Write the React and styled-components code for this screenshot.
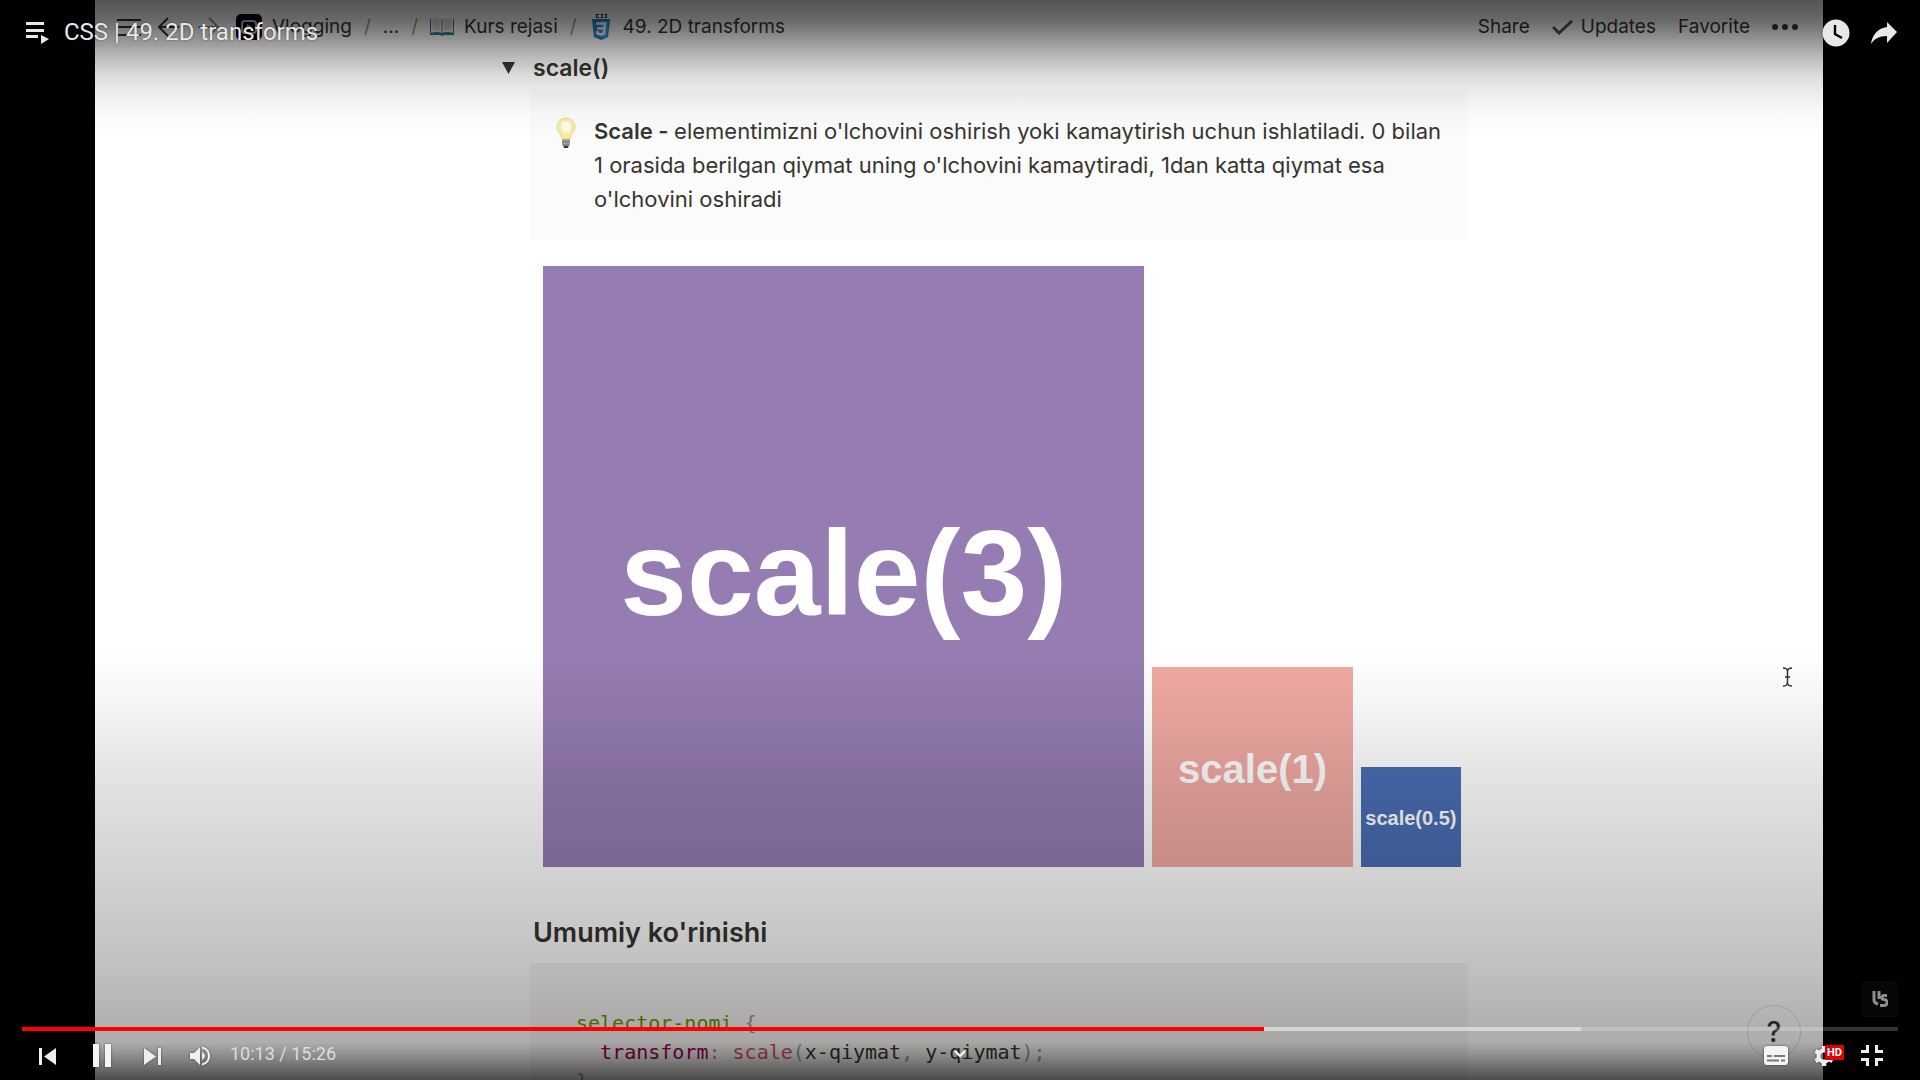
import React from "react";
import styled, { createGlobalStyle } from "styled-components";

const sans = `Inter, "Liberation Sans", sans-serif`;
const roboto = `Roboto, "Liberation Sans", sans-serif`;

const Global = createGlobalStyle`
  * { box-sizing: border-box; }
  body { margin: 0; background: #000; }
  button { font: inherit; color: inherit; background: none; border: 0; padding: 0; cursor: pointer; }
  a { color: inherit; text-decoration: none; }
  svg { display: block; flex: none; }
`;

const Player = styled.main`
  display: grid;
  grid-template: minmax(0, 1fr) / minmax(0, 1fr);
  height: 100vh;
  overflow: hidden;
  background: #000;
  & > * { grid-area: 1 / 1; position: relative; }
`;

const Frame = styled.div`
  margin: 0 97px 0 95px;
  overflow: hidden;
  background: #fff;
  color: #37352f;
  font-family: ${sans};
`;

const TopBar = styled.nav`
  display: flex;
  align-items: center;
  justify-content: space-between;
  height: 53px;
  padding: 0 24px 0 22px;
  font-size: 19px;
  line-height: 24px;
`;

const Group = styled.div`
  display: flex;
  align-items: center;
  gap: ${(p) => p.$gap}px;
`;

const Crumb = styled.a`
  display: flex;
  align-items: center;
  gap: 10px;
`;

const Slash = styled.span`
  color: #9b9a97;
`;

const BarButton = styled.button`
  display: flex;
  align-items: center;
  gap: 8px;
`;

const Column = styled.article`
  max-width: 1018px;
  margin: 0 auto;
`;

const ToggleRow = styled.div`
  display: flex;
  align-items: center;
  gap: 18px;
  height: 30px;
  margin-bottom: 7px;
  padding-left: 52px;
`;

const ToggleTitle = styled.h3`
  margin: 0;
  font-size: 23px;
  line-height: 30px;
  font-weight: 600;
`;

const ToggleBody = styled.div`
  padding-left: 80px;
`;

const Callout = styled.section`
  display: flex;
  gap: 18px;
  padding: 24px 20px 24px 26px;
  border-radius: 4px;
  background: #fbfbfb;
  font-size: 22px;
  line-height: 34px;
  svg { margin-top: 3px; }
  p { margin: 0; }
  b { font-weight: 600; }
`;

const Figure = styled.figure`
  display: grid;
  grid-template-columns: minmax(0, 6fr) minmax(0, 2fr) minmax(0, 1fr);
  align-items: end;
  gap: 8px;
  margin: 26px 7px 49px 13px;
`;

const Square = styled.div`
  display: flex;
  align-items: center;
  justify-content: center;
  aspect-ratio: 1;
  padding-top: ${(p) => p.$drop}px;
  background: ${(p) => p.$fill};
  color: #fff;
  font: bold ${(p) => p.$size}px "Liberation Sans", Arial, sans-serif;
  white-space: nowrap;
`;

const SectionTitle = styled.h2`
  margin: 0 0 13px;
  padding-left: 3px;
  font-size: 27px;
  line-height: 34px;
  font-weight: 600;
`;

const CodeBlock = styled.pre`
  margin: 0;
  padding: 46px;
  border-radius: 4px;
  background: #f7f6f3;
  color: #37352f;
  font: 20px/29px "DejaVu Sans Mono", monospace;
`;

const Token = styled.span`
  color: ${(p) => p.$color};
`;

const HelpButton = styled.button`
  position: absolute;
  right: 22px;
  bottom: 21px;
  width: 54px;
  height: 54px;
  border: 1px solid #dcdcdc;
  border-radius: 50%;
  font-size: 28px;
  font-weight: 500;
`;

const Cursor = styled.svg`
  position: absolute;
  right: 30px;
  top: 667px;
`;

const TopShade = styled.div`
  height: 140px;
  pointer-events: none;
  background: linear-gradient(
    rgba(0, 0, 0, 0.67) 0,
    rgba(0, 0, 0, 0.59) 20px,
    rgba(0, 0, 0, 0.44) 38px,
    rgba(0, 0, 0, 0.28) 56px,
    rgba(0, 0, 0, 0.15) 74px,
    rgba(0, 0, 0, 0.07) 94px,
    rgba(0, 0, 0, 0.02) 116px,
    transparent 140px
  );
`;

const BottomShade = styled.div`
  align-self: end;
  height: 440px;
  pointer-events: none;
  background: linear-gradient(
    transparent 10px,
    rgba(0, 0, 0, 0.04) 60px,
    rgba(0, 0, 0, 0.12) 150px,
    rgba(0, 0, 0, 0.18) 240px,
    rgba(0, 0, 0, 0.24) 320px,
    rgba(0, 0, 0, 0.3) 380px,
    rgba(0, 0, 0, 0.32) 402px,
    rgba(0, 0, 0, 0.46) 417px,
    rgba(0, 0, 0, 0.7) 440px
  );
`;

const Chrome = styled.div`
  display: flex;
  flex-direction: column;
  justify-content: space-between;
  color: #e8e8e8;
  font-family: ${roboto};
`;

const Header = styled.header`
  display: flex;
  align-items: center;
  height: 65px;
  padding: 0 12px;
`;

const Title = styled.h1`
  flex: 1;
  margin: 0;
  padding-bottom: 2px;
  font-size: 24px;
  line-height: 32px;
  font-weight: 400;
  text-shadow: 0 0 2px rgba(0, 0, 0, 0.5);
`;

const IconButton = styled.button`
  display: flex;
  align-items: center;
  justify-content: center;
  width: ${(p) => p.$width || 48}px;
  height: 48px;
  svg { filter: drop-shadow(0 0 1px rgba(0, 0, 0, 0.5)); }
`;

const Footer = styled.footer`
  display: flex;
  flex-direction: column;
`;

const Watermark = styled.a`
  display: flex;
  align-items: center;
  justify-content: center;
  align-self: flex-end;
  width: 36px;
  height: 36px;
  margin: 0 22px 10px;
  background: #060708;
`;

const Progress = styled.input`
  appearance: none;
  display: block;
  height: 4px;
  margin: 0 22px;
  background: linear-gradient(
    90deg,
    #f00 ${(p) => p.$played}%,
    rgba(255, 255, 255, 0.5) ${(p) => p.$played}% ${(p) => p.$loaded}%,
    rgba(255, 255, 255, 0.2) ${(p) => p.$loaded}%
  );
  &::-webkit-slider-thumb { appearance: none; width: 0; height: 0; }
`;

const Controls = styled.div`
  display: flex;
  align-items: center;
  height: 49px;
  padding: 0 24px;
`;

const Time = styled.div`
  flex: 1;
  padding: 0 0 3px 6px;
  font-size: 18px;
  line-height: 24px;
  color: #ddd;
`;

const SettingsIcon = styled.span`
  position: relative;
  display: block;
`;

const HdBadge = styled.span`
  position: absolute;
  left: 11px;
  top: 0;
  padding: 0 2px;
  border-radius: 1px;
  background: #e00000;
  color: #fff;
  font: bold 11px/15px ${roboto};
`;

const Chevron = styled.svg`
  position: absolute;
  left: calc(50% - 6px);
  bottom: 22px;
`;

const MenuIcon = () => (
  <svg width="24" height="20" stroke="#37352f" strokeWidth="2"><path d="M0 3h24M0 10h24M0 18h24" /></svg>
);
const Arrow = ({ flip, color }) => (
  <svg width="22" height="20" viewBox="0 0 22 20" fill="none" stroke={color} strokeWidth="2">
    <path d={flip ? "M1 10h19M12 1l9 9-9 9" : "M21 10H2M10 1l-9 9 9 9"} />
  </svg>
);
const ChannelIcon = () => (
  <svg width="26" height="26" viewBox="0 0 26 26">
    <rect width="26" height="26" rx="5" fill="#000" />
    <rect x="6" y="7" width="14" height="12" rx="3" fill="none" stroke="#bbb" strokeWidth="2" />
    <path d="M11 10l5 3-5 3z" fill="#bbb" />
  </svg>
);
const BookIcon = () => (
  <svg width="24" height="19" viewBox="0 0 24 19">
    <path d="M0 2h24v16H14l-2 1-2-1H0z" fill="#2f7ba5" />
    <path d="M1 1Q7-1 12 2v14Q7 14 1 16zM23 1Q17-1 12 2v14q5-2 11 0z" fill="#f2f0ec" />
    <path d="M12 2v14" stroke="#777" />
    <path d="M3 4h7M3 6h7M3 8h7M3 10h7M3 12h7M14 4h7M14 6h7M14 8h7M14 10h7M14 12h7" stroke="#c4c1bc" />
  </svg>
);
const CssIcon = () => (
  <svg width="24" height="26" viewBox="-3 0 24 26">
    <path d="M7 .5H4.500v3H7M11 .5H9l1.500 1.500v1.500H8.500M15 .5h-2l1.500 1.500v1.500h-2" fill="none" stroke="#111" />
    <path d="M0 5h18l-2 18-7 3-7-3z" fill="#2483cc" />
    <path d="M9 7h7l-1 15-6 2z" fill="#33a9ee" />
    <path d="M4 9.500h9l-1 10-3 1-3.500-1v-2.500M5 14.500h7" fill="none" stroke="#fff" strokeWidth="2.400" />
  </svg>
);
const CheckIcon = () => (
  <svg width="21" height="16" viewBox="0 0 21 16" fill="none" stroke="#55534e" strokeWidth="3"><path d="M1 8l6 6L20 2" /></svg>
);
const DotsIcon = () => (
  <svg width="27" height="8" fill="#37352f"><circle cx="3" cy="4" r="3" /><circle cx="13" cy="4" r="3" /><circle cx="23" cy="4" r="3" /></svg>
);
const BulbIcon = () => (
  <svg width="20" height="32" viewBox="0 0 20 32">
    <path d="M10 1a9 9 0 0 1 9 9c0 5-4 6-5 12H6C5 16 1 15 1 10a9 9 0 0 1 9-9z" fill="#fbe9a6" stroke="#ecd88c" />
    <ellipse cx="10" cy="10" rx="5" ry="6" fill="#fffbe6" />
    <path d="M6 22h8v6l-2 3H8l-2-3z" fill="#a5a5a5" />
    <path d="M6 25h8M7 28h6" stroke="#666" />
    <path d="M8 30h4" stroke="#333" strokeWidth="2" />
  </svg>
);

const PlaylistIcon = () => (
  <svg width="24" height="24" viewBox="0 0 24 24" fill="#e8e8e8">
    <path d="M0 1h18v3H0zM0 8h18v3H0zM0 14h12v3H0zM15 14l8 4-8 5z" />
  </svg>
);
const ClockIcon = () => (
  <svg width="28" height="28" viewBox="0 0 28 28">
    <circle cx="14" cy="14" r="13.5" fill="#e8e8e8" />
    <path d="M13 6v9l7 4" fill="none" stroke="#000" strokeWidth="2.4" />
  </svg>
);
const ShareIcon = () => (
  <svg width="28" height="24" viewBox="0 0 28 24" fill="#e8e8e8"><path d="M17 1l10 10-10 11v-7C9 15 4 18 1 23 2 14 8 7 17 6z" /></svg>
);
const PrevIcon = () => (
  <svg width="18" height="18" fill="#eee"><path d="M0 1h3v17H0zM17 1v17L5 9.500z" /></svg>
);
const NextIcon = () => (
  <svg width="18" height="18" fill="#eee"><path d="M15 1h3v17h-3zM1 1v17l12-8.500z" /></svg>
);
const PauseIcon = () => (
  <svg width="22" height="24" fill="#f4f4f4"><path d="M4 0h6v23H4zM16 0h6v23h-6z" /></svg>
);
const VolumeIcon = () => (
  <svg width="22" height="20" viewBox="0 0 22 20" fill="#f0f0f0">
    <path d="M1 7h4l6-6v18l-6-6H1zM13 6q3 1.500 3 4t-3 4z" />
    <path d="M13 1.500c5 1 7 5 7 8.500s-2 7.500-7 8.500" fill="none" stroke="#f0f0f0" strokeWidth="2.200" />
  </svg>
);
const CaptionsIcon = () => (
  <svg width="24" height="20" viewBox="0 0 24 20">
    <rect width="24" height="19" rx="3" fill="#f4f4f4" />
    <path d="M3 10h5M10 10h11M3 14.500h12M17 14.500h4" stroke="#777" strokeWidth="2" />
  </svg>
);
const GearIcon = () => (
  <svg width="20" height="22" viewBox="0 0 20 22">
    <circle cx="10" cy="11" r="5.500" fill="none" stroke="#eee" strokeWidth="4" />
    <path
      d="M10 1v4M10 17v4M1.500 6l3.500 2M15 14l3.500 2M1.500 16L5 14M15 8l3.500-2"
      stroke="#eee"
      strokeWidth="4.500"
    />
  </svg>
);
const ExitFullIcon = () => (
  <svg width="22" height="22" fill="none" stroke="#eee" strokeWidth="3"><path d="M0 6.500h6.500V0M15.500 0v6.500H22M0 14.500h6.500V21M15.500 21v-6.500H22" /></svg>
);
const MarkIcon = () => (
  <svg width="16" height="16" viewBox="0 0 16 16" fill="none" stroke="#8e8e8e" strokeWidth="3">
    <path d="M2 0v9q0 3 4 4M7 0v8M15 4.500h-3q-2 0-2 2t2 2q3 0 3 3t-3 3H8" />
  </svg>
);

const squares = [
  { label: "scale(3)", fill: "#957cb2", size: 120, drop: 12 },
  { label: "scale(1)", fill: "#f0aaa3", size: 40, drop: 4 },
  { label: "scale(0.5)", fill: "#496eb4", size: 20, drop: 2 },
];

const punct = "#999";
const duration = 926;
const position = 613;

export default function App() {
  return (
    <>
      <Global />
      <Player>
        <Frame>
          <TopBar>
            <Group $gap={12}>
              <Group $gap={17}>
                <BarButton aria-label="Menu"><MenuIcon /></BarButton>
                <BarButton aria-label="Back"><Arrow color="#37352f" /></BarButton>
                <BarButton aria-label="Forward"><Arrow flip color="#9b9a97" /></BarButton>
                <Crumb href="#vlogging"><ChannelIcon />Vlogging</Crumb>
              </Group>
              <Slash>/</Slash>
              <Crumb href="#more">...</Crumb>
              <Slash>/</Slash>
              <Crumb href="#kurs"><BookIcon />Kurs rejasi</Crumb>
              <Slash>/</Slash>
              <Crumb href="#transforms"><CssIcon />49. 2D transforms</Crumb>
            </Group>
            <Group $gap={22}>
              <BarButton>Share</BarButton>
              <BarButton><CheckIcon />Updates</BarButton>
              <BarButton>Favorite</BarButton>
              <BarButton aria-label="More"><DotsIcon /></BarButton>
            </Group>
          </TopBar>
          <Column>
            <ToggleRow>
              <BarButton aria-label="Toggle section">
                <svg width="13" height="12" fill="#37352f"><path d="M0 0h13L6.500 12z" /></svg>
              </BarButton>
              <ToggleTitle>scale()</ToggleTitle>
            </ToggleRow>
            <ToggleBody>
              <Callout>
                <BulbIcon />
                <p>
                  <b>Scale - </b>elementimizni o'lchovini oshirish yoki kamaytirish uchun ishlatiladi. 0 bilan
                  1 orasida berilgan qiymat uning o'lchovini kamaytiradi, 1dan katta qiymat esa o'lchovini oshiradi
                </p>
              </Callout>
              <Figure>
                {squares.map((s) => (
                  <Square key={s.label} $fill={s.fill} $size={s.size} $drop={s.drop}>{s.label}</Square>
                ))}
              </Figure>
              <SectionTitle>Umumiy ko'rinishi</SectionTitle>
              <CodeBlock>
                <code>
                  <Token $color="#669900">selector-nomi</Token> <Token $color={punct}>{"{"}</Token>{"\n  "}
                  <Token $color="#990055">transform</Token><Token $color={punct}>:</Token>{" "}
                  <Token $color="#dd4a68">scale</Token><Token $color={punct}>(</Token>x-qiymat<Token $color={punct}>,</Token>{" "}
                  y-qiymat<Token $color={punct}>);</Token>{"\n"}
                  <Token $color={punct}>{"}"}</Token>
                </code>
              </CodeBlock>
            </ToggleBody>
          </Column>
          <HelpButton>?</HelpButton>
          <Cursor width="11" height="20" viewBox="0 0 11 20" fill="none" stroke="#333" strokeWidth="1.500">
            <path d="M1 1q4 0 4.500 3Q6 1 10 1M5.500 4v12M1 19q4 0 4.500-3 .5 3 4.500 3M3 10h5" />
          </Cursor>
        </Frame>
        <TopShade />
        <BottomShade />
        <Chrome>
          <Header>
            <IconButton aria-label="Playlist" $width={52}><PlaylistIcon /></IconButton>
            <Title>CSS | 49. 2D transforms</Title>
            <IconButton aria-label="Watch later"><ClockIcon /></IconButton>
            <IconButton aria-label="Share"><ShareIcon /></IconButton>
          </Header>
          <Footer>
            <Watermark href="#channel" aria-label="Channel"><MarkIcon /></Watermark>
            <Progress
              type="range"
              aria-label="Seek"
              min="0"
              max={duration}
              defaultValue={position}
              $played={(position / duration) * 100}
              $loaded={83.1}
            />
            <Controls>
              <IconButton aria-label="Previous"><PrevIcon /></IconButton>
              <IconButton aria-label="Pause" $width={56}><PauseIcon /></IconButton>
              <IconButton aria-label="Next"><NextIcon /></IconButton>
              <IconButton aria-label="Mute"><VolumeIcon /></IconButton>
              <Time>10:13 / 15:26</Time>
              <IconButton aria-label="Subtitles"><CaptionsIcon /></IconButton>
              <IconButton aria-label="Settings">
                <SettingsIcon><GearIcon /><HdBadge>HD</HdBadge></SettingsIcon>
              </IconButton>
              <IconButton aria-label="Exit full screen"><ExitFullIcon /></IconButton>
            </Controls>
          </Footer>
          <Chevron width="12" height="8" fill="none" stroke="#fff" strokeWidth="2"><path d="M1 1l5 5 5-5" /></Chevron>
        </Chrome>
      </Player>
    </>
  );
}
